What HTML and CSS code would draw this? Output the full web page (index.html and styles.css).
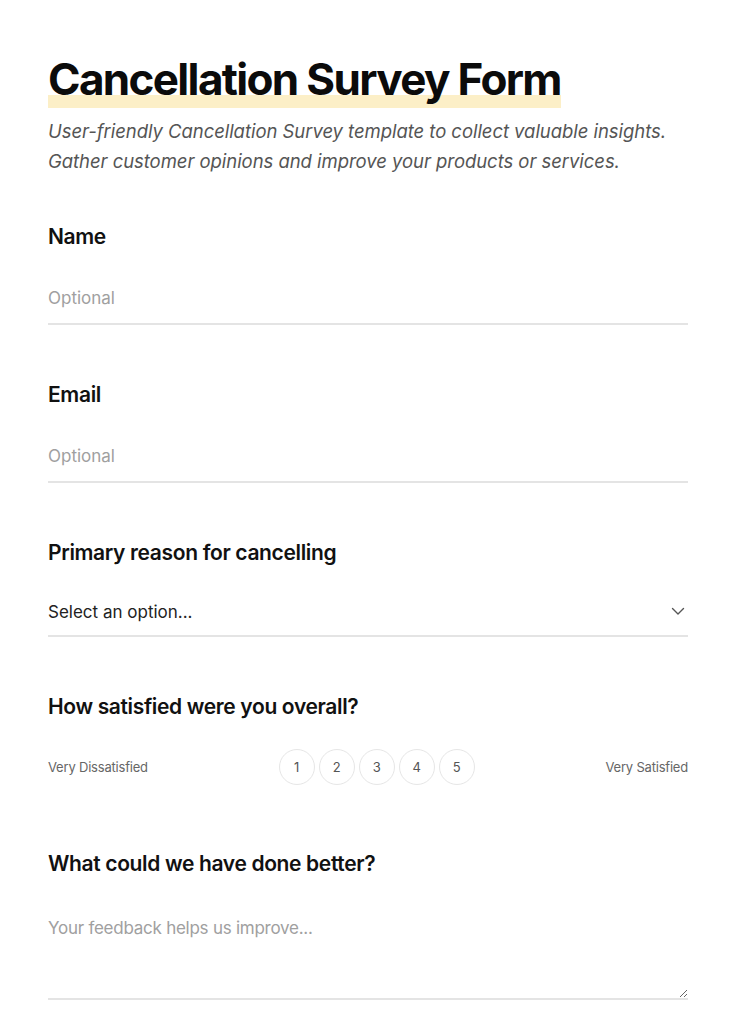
FILE: index.html
```html
<!DOCTYPE html>
<html lang="en">
<head>
<meta charset="utf-8">
<title>Cancellation Survey Form</title>
<link rel="stylesheet" href="styles.css">
</head>
<body>
<main class="page">
  <header class="intro">
    <h1 class="title"><span class="title-mark">Cancellation Survey Form</span></h1>
    <p class="lead">User-friendly Cancellation Survey template to collect valuable insights. Gather customer opinions and improve your products or services.</p>
  </header>

  <form class="form">
    <div class="field">
      <label class="label" for="name">Name</label>
      <input class="input" id="name" type="text" placeholder="Optional">
    </div>

    <div class="field">
      <label class="label" for="email">Email</label>
      <input class="input" id="email" type="email" placeholder="Optional">
    </div>

    <div class="field">
      <label class="label" for="reason">Primary reason for cancelling</label>
      <div class="select-wrap">
        <select class="select" id="reason">
          <option>Select an option...</option>
        </select>
        <svg class="chevron" width="14" height="9" viewBox="0 0 14 9" aria-hidden="true">
          <path d="M1.5 1.5 L7 7 L12.5 1.5" fill="none" stroke="#555" stroke-width="1.4" stroke-linecap="round" stroke-linejoin="round"/>
        </svg>
      </div>
    </div>

    <div class="field">
      <span class="label">How satisfied were you overall?</span>
      <div class="rating">
        <span class="rating-end">Very Dissatisfied</span>
        <div class="rating-scale">
          <button type="button" class="rate">1</button>
          <button type="button" class="rate">2</button>
          <button type="button" class="rate">3</button>
          <button type="button" class="rate">4</button>
          <button type="button" class="rate">5</button>
        </div>
        <span class="rating-end">Very Satisfied</span>
      </div>
    </div>

    <div class="field">
      <label class="label" for="better">What could we have done better?</label>
      <textarea class="textarea" id="better" placeholder="Your feedback helps us improve..."></textarea>
    </div>
  </form>
</main>
</body>
</html>
```

FILE: styles.css
```css
* { box-sizing: border-box; }

html, body {
  margin: 0;
  padding: 0;
  background: #ffffff;
}

body {
  font-family: Inter, "Noto Sans", "Liberation Sans", sans-serif;
  color: #111111;
}

.page {
  padding: 52px 48px 0;
}

.intro {
  margin-bottom: 47px;
}

.title {
  margin: 0;
  font-size: 44px;
  line-height: 54px;
  font-weight: 700;
  letter-spacing: -1.65px;
  color: #0b0b0b;
}

.title-mark {
  background: linear-gradient(to bottom, transparent 77%, #fcefc7 77%, #fcefc7 100%);
  padding-bottom: 2px;
}

.lead {
  margin: 10px 0 0;
  font-size: 18.5px;
  line-height: 30px;
  font-style: italic;
  font-weight: 400;
  color: #555555;
  letter-spacing: -0.05px;
  max-width: 640px;
}

.form {
  display: flex;
  flex-direction: column;
  gap: 56px;
}

.field {
  display: flex;
  flex-direction: column;
  gap: 22px;
}

.label {
  display: block;
  font-size: 21px;
  line-height: 28px;
  font-weight: 600;
  letter-spacing: -0.35px;
  color: #111111;
}

.input,
.select,
.textarea {
  display: block;
  width: 100%;
  border: 0;
  border-bottom: 2px solid #e4e4e4;
  border-radius: 0;
  background: transparent;
  font-family: inherit;
  font-size: 17px;
  line-height: 27px;
  color: #222222;
  outline: none;
  margin: 0;
}

.input {
  padding: 12px 0 11px;
}

.input::placeholder,
.textarea::placeholder {
  color: #a0a0a0;
  opacity: 1;
}

.select-wrap {
  position: relative;
}

.select {
  appearance: none;
  -webkit-appearance: none;
  padding: 10px 30px 10px 0;
  height: 48px;
  color: #222222;
}

.chevron {
  position: absolute;
  right: 3px;
  top: 18px;
  pointer-events: none;
}

.rating {
  display: flex;
  align-items: center;
  justify-content: space-between;
  padding: 6px 0 9px;
}

.rating-end {
  font-size: 13px;
  line-height: 18px;
  color: #666666;
  letter-spacing: -0.2px;
}

.rating-scale {
  display: flex;
  gap: 4px;
}

.rate {
  width: 36px;
  height: 36px;
  border-radius: 50%;
  border: 1px solid #e6e6e6;
  background: #ffffff;
  font-family: inherit;
  font-size: 13px;
  color: #555555;
  padding: 0;
  display: flex;
  align-items: center;
  justify-content: center;
}

.textarea {
  padding: 15px 0 8px;
  height: 100px;
  resize: vertical;
  letter-spacing: -0.25px;
}
```
